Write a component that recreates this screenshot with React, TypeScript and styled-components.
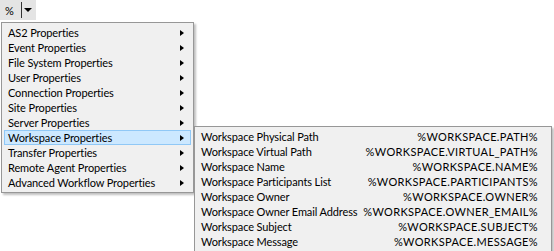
import styled, { createGlobalStyle } from "styled-components";

const Global = createGlobalStyle`
    body {
        margin: 0;
        background: #ffffff;
        font-family: Lato, "Noto Sans", sans-serif;
        font-size: 11px;
        letter-spacing: -0.12px;
        color: #000000;
    }
`

const Page = styled.div`
    position: relative;
    width: 554px;
    height: 251px;
    overflow: hidden;
`

const Toolbar = styled.div`
    display: flex;
    align-items: flex-start;
    height: 22px;
`

const Button = styled.div`
    display: flex;
    align-items: center;
    height: 20px;
    width: 36px;
    background: #e4e4e4;
    font-size: 11px;
`

const ButtonLabel = styled.span`
    padding: 0 7px 0 5px;
`

const ButtonSplit = styled.span`
    width: 1px;
    height: 16px;
    background: #333;
`

const DropArrow = styled.span`
    width: 0;
    height: 0;
    margin-left: 2px;
    border-left: 4px solid transparent;
    border-right: 4px solid transparent;
    border-top: 4px solid #000;
`

const Menu = styled.div<{ $left: number; $top: number; $width: number }>`
    position: absolute;
    left: ${p => p.$left}px;
    top: ${p => p.$top}px;
    width: ${p => p.$width}px;
    background: #f0f0f0;
    border: 1px solid #979797;
    box-shadow: 2px 2px 2px rgba(0, 0, 0, 0.25);
    padding: 2px;
    box-sizing: border-box;
`

const Item = styled.div<{ $active?: boolean }>`
    display: flex;
    align-items: center;
    height: 15px;
    padding: 0 6px 0 3px;
    box-sizing: border-box;
    white-space: nowrap;
    border: 1px solid ${p => (p.$active ? "#90c8f6" : "transparent")};
    background: ${p => (p.$active ? "#cce8ff" : "transparent")};
`

const Label = styled.span`
    flex: 1;
`

const Value = styled.span`
    margin-right: 4px;
    letter-spacing: 0.35px;
`

const SubArrow = styled.span`
    width: 0;
    height: 0;
    border-top: 3.5px solid transparent;
    border-bottom: 3.5px solid transparent;
    border-left: 4px solid #000;
`

const mainItems = [
    "AS2 Properties",
    "Event Properties",
    "File System Properties",
    "User Properties",
    "Connection Properties",
    "Site Properties",
    "Server Properties",
    "Workspace Properties",
    "Transfer Properties",
    "Remote Agent Properties",
    "Advanced Workflow Properties",
]

const subItems: [string, string][] = [
    ["Workspace Physical Path", "%WORKSPACE.PATH%"],
    ["Workspace Virtual Path", "%WORKSPACE.VIRTUAL_PATH%"],
    ["Workspace Name", "%WORKSPACE.NAME%"],
    ["Workspace Participants List", "%WORKSPACE.PARTICIPANTS%"],
    ["Workspace Owner", "%WORKSPACE.OWNER%"],
    ["Workspace Owner Email Address", "%WORKSPACE.OWNER_EMAIL%"],
    ["Workspace Subject", "%WORKSPACE.SUBJECT%"],
    ["Workspace Message", "%WORKSPACE.MESSAGE%"],
]

const App = () => {
    return (
        <Page>
            <Global />
            <Toolbar>
                <Button>
                    <ButtonLabel>%</ButtonLabel>
                    <ButtonSplit />
                    <DropArrow />
                </Button>
            </Toolbar>
            <Menu $left={1} $top={22} $width={193}>
                {mainItems.map(name => (
                    <Item key={name} $active={name === "Workspace Properties"}>
                        <Label>{name}</Label>
                        <SubArrow />
                    </Item>
                ))}
            </Menu>
            <Menu $left={194} $top={126} $width={358}>
                {subItems.map(([name, value]) => (
                    <Item key={name}>
                        <Label>{name}</Label>
                        <Value>{value}</Value>
                    </Item>
                ))}
            </Menu>
        </Page>
    )
}

export default App
